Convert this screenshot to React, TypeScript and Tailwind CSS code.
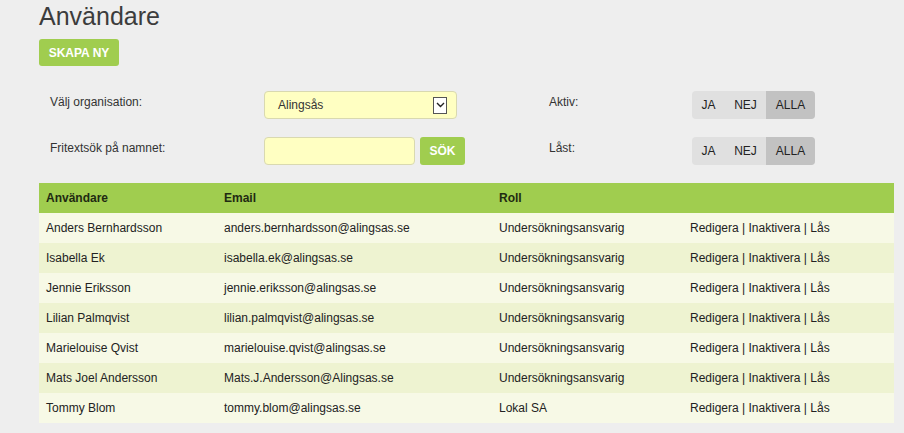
const USERS = [
  { name: "Anders Bernhardsson", email: "anders.bernhardsson@alingsas.se", role: "Undersökningsansvarig" },
  { name: "Isabella Ek", email: "isabella.ek@alingsas.se", role: "Undersökningsansvarig" },
  { name: "Jennie Eriksson", email: "jennie.eriksson@alingsas.se", role: "Undersökningsansvarig" },
  { name: "Lilian Palmqvist", email: "lilian.palmqvist@alingsas.se", role: "Undersökningsansvarig" },
  { name: "Marielouise Qvist", email: "marielouise.qvist@alingsas.se", role: "Undersökningsansvarig" },
  { name: "Mats Joel Andersson", email: "Mats.J.Andersson@Alingsas.se", role: "Undersökningsansvarig" },
  { name: "Tommy Blom", email: "tommy.blom@alingsas.se", role: "Lokal SA" },
];

function Toggle() {
  return (
    <div className="flex h-[28px] w-[123px] overflow-hidden rounded-[4px] bg-[#e0e0e0] text-[12px] text-[#222]">
      <span className="flex w-[33px] items-center justify-center">JA</span>
      <span className="flex w-[41px] items-center justify-center">NEJ</span>
      <span className="flex flex-1 items-center justify-center bg-[#c2c2c2]">ALLA</span>
    </div>
  );
}

export default function App() {
  return (
    <div className="min-h-[433px] w-[904px] bg-[#eeeeee] pl-[39px] pr-[10px] font-['Liberation_Sans',Arial,sans-serif] text-[#222]">
      <h1 className="pt-[1px] text-[25px] leading-[30px] text-[#3c3c3c]">Användare</h1>
      <button className="mt-[8px] flex h-[27px] w-[80px] items-center justify-center rounded-[3px] bg-[#a0cd4f] text-[12px] font-bold text-white">
        SKAPA NY
      </button>

      <div className="mt-[25px] grid grid-cols-[214px_285px_143px_auto] gap-y-[18px] pl-[11px] text-[12px] text-[#333]">
        <div className="pt-[2px]">Välj organisation:</div>
        <div className="flex h-[28px] w-[193px] items-center justify-between rounded-[4px] border border-[#d9d9b0] bg-[#ffffc2] pl-[13px] pr-[9px]">
          <span>Alingsås</span>
          <span className="flex h-[17px] w-[14px] items-center justify-center border border-[#555] bg-white">
            <svg width="9" height="6" viewBox="0 0 9 6" fill="none" stroke="#222" strokeWidth="1.4">
              <path d="M1 1l3.5 3.5L8 1" />
            </svg>
          </span>
        </div>
        <div className="pt-[2px]">Aktiv:</div>
        <Toggle />

        <div className="pt-[2px]">Fritextsök på namnet:</div>
        <div className="flex h-[28px] gap-[5px]">
          <div className="h-full w-[151px] rounded-[4px] border border-[#d9d9b0] bg-[#ffffc2]" />
          <button className="flex h-full w-[45px] items-center justify-center rounded-[3px] bg-[#a0cd4f] text-[12px] font-bold text-white">
            SÖK
          </button>
        </div>
        <div className="pt-[2px]">Låst:</div>
        <Toggle />
      </div>

      <table className="mt-[18px] w-[855px] table-fixed border-collapse text-[12px]">
        <thead>
          <tr className="h-[30px] bg-[#a0cd4f] text-left font-bold text-[#1f2a12]">
            <th className="w-[185px] pl-[7px]">Användare</th>
            <th className="w-[275px]">Email</th>
            <th className="w-[191px]">Roll</th>
            <th />
          </tr>
        </thead>
        <tbody className="text-[#222]">
          {USERS.map((u, i) => (
            <tr key={u.email} className={`h-[30px] ${i % 2 === 0 ? "bg-[#f7f9e6]" : "bg-[#eef3d1]"}`}>
              <td className="pl-[7px]">{u.name}</td>
              <td>{u.email}</td>
              <td>{u.role}</td>
              <td>Redigera | Inaktivera | Lås</td>
            </tr>
          ))}
        </tbody>
      </table>
    </div>
  );
}
